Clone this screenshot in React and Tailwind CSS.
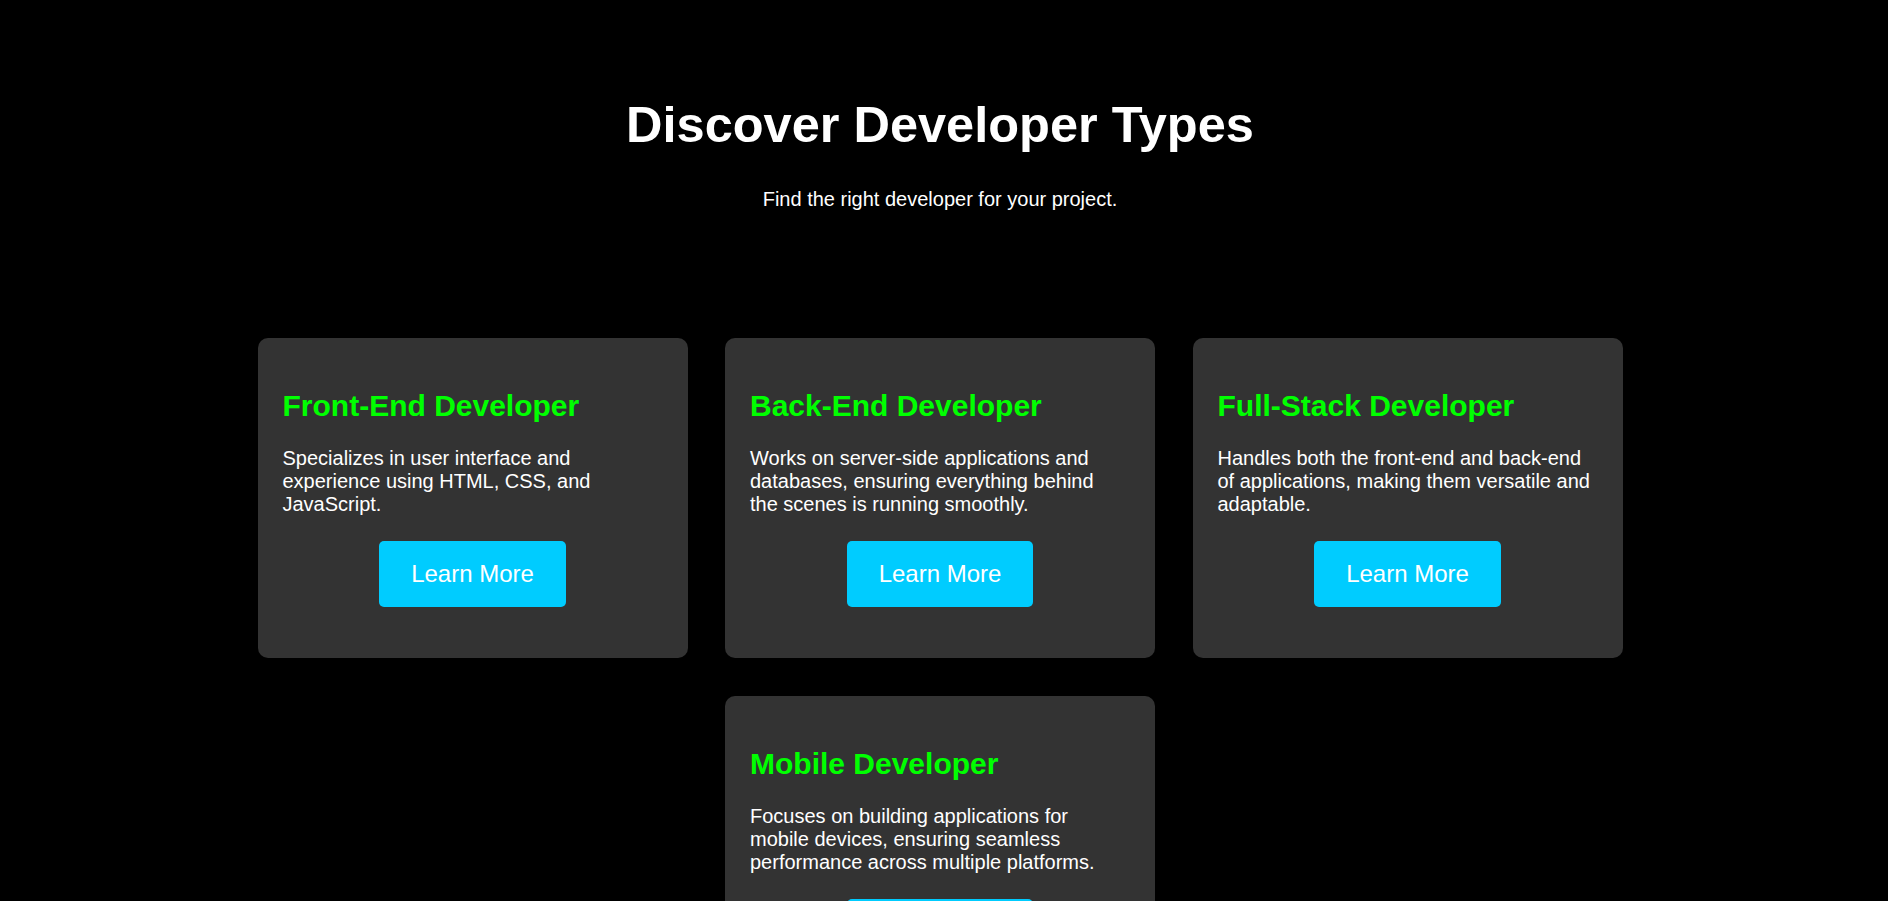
import React from 'react';

const DEVELOPER_TYPES = [
  {
    title: 'Front-End Developer',
    description: 'Specializes in user interface and experience using HTML, CSS, and JavaScript.',
  },
  {
    title: 'Back-End Developer',
    description: 'Works on server-side applications and databases, ensuring everything behind the scenes is running smoothly.',
  },
  {
    title: 'Full-Stack Developer',
    description: 'Handles both the front-end and back-end of applications, making them versatile and adaptable.',
  },
  {
    title: 'Mobile Developer',
    description: 'Focuses on building applications for mobile devices, ensuring seamless performance across multiple platforms.',
  },
];

const DeveloperCard = ({ type }) => (
  <div className="w-[430px] bg-[#333333] rounded-[10px] px-[25px] pt-[50px] pb-[51px] flex flex-col">
    <h2 className="text-[30px] leading-[35px] font-bold text-[#00ff00]">{type.title}</h2>
    <p className="mt-[24px] max-w-[375px] text-[20px] leading-[23px] text-white">{type.description}</p>
    <div className="mt-[25px] flex justify-center">
      <button className="bg-[#00ccff] text-white text-[24px] leading-[28px] px-[32px] py-[19px] rounded-[5px]">
        Learn More
      </button>
    </div>
  </div>
);

const App = () => {
  return (
    <div className="min-h-screen bg-black text-white font-['Liberation_Sans',Arial,sans-serif] pr-2 pb-16">
      <header className="pt-[96px] text-center">
        <h1 className="text-[50.5px] leading-[58px] font-bold">Discover Developer Types</h1>
        <p className="mt-[34px] text-[20px] leading-[23px]">Find the right developer for your project.</p>
      </header>

      <section className="mt-[127px] w-[1366px] mx-auto flex flex-wrap justify-center gap-x-[37.5px] gap-y-[38px]">
        {DEVELOPER_TYPES.map((type) => (
          <DeveloperCard key={type.title} type={type} />
        ))}
      </section>
    </div>
  );
};

export default App;
